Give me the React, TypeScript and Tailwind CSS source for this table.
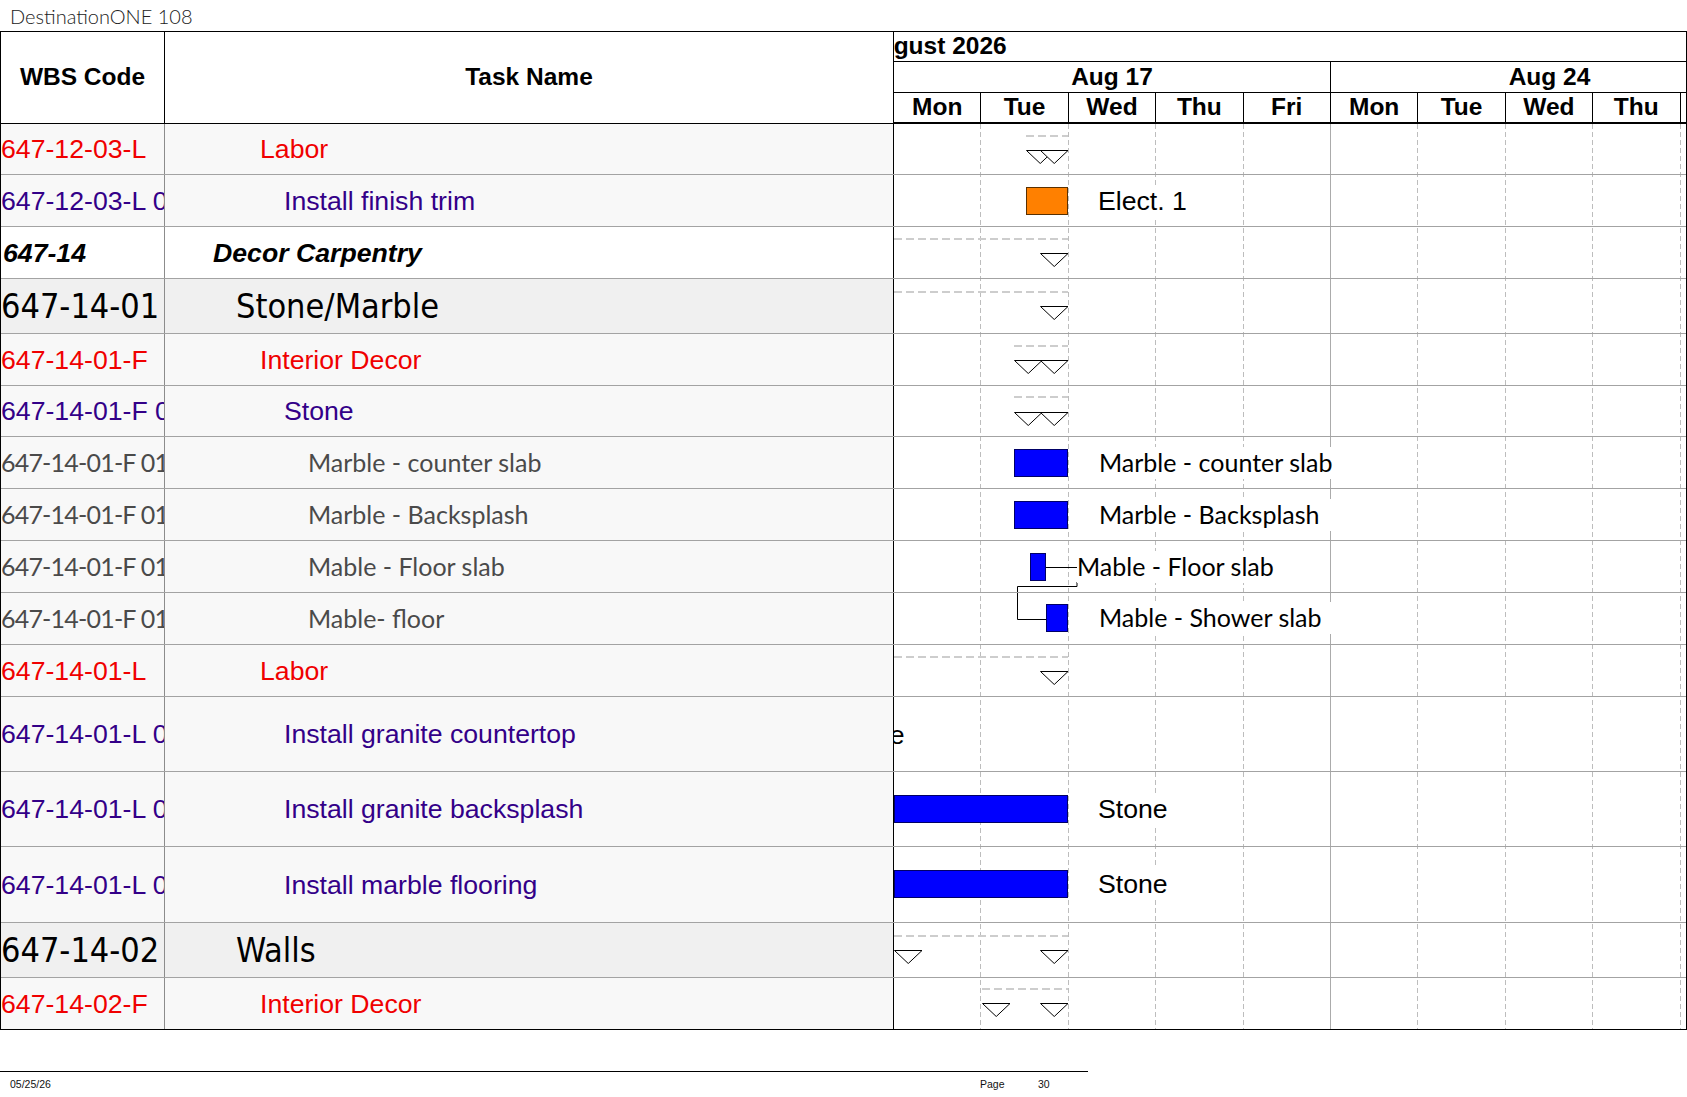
import React from 'react';

type Kind = 'red' | 'purple' | 'bi' | 'big' | 'gray';
type Row = { h: number; code: string; name: string; kind: Kind };

const rows: Row[] = [
  { h: 51, code: '647-12-03-L', name: 'Labor', kind: 'red' },
  { h: 52, code: '647-12-03-L 01', name: 'Install finish trim', kind: 'purple' },
  { h: 52, code: '647-14', name: 'Decor Carpentry', kind: 'bi' },
  { h: 55, code: '647-14-01', name: 'Stone/Marble', kind: 'big' },
  { h: 52, code: '647-14-01-F', name: 'Interior Decor', kind: 'red' },
  { h: 51, code: '647-14-01-F 01', name: 'Stone', kind: 'purple' },
  { h: 52, code: '647-14-01-F 01', name: 'Marble - counter slab', kind: 'gray' },
  { h: 52, code: '647-14-01-F 01', name: 'Marble - Backsplash', kind: 'gray' },
  { h: 52, code: '647-14-01-F 01', name: 'Mable - Floor slab', kind: 'gray' },
  { h: 52, code: '647-14-01-F 01', name: 'Mable- floor', kind: 'gray' },
  { h: 52, code: '647-14-01-L', name: 'Labor', kind: 'red' },
  { h: 75, code: '647-14-01-L 01', name: 'Install granite countertop', kind: 'purple' },
  { h: 75, code: '647-14-01-L 02', name: 'Install granite backsplash', kind: 'purple' },
  { h: 76, code: '647-14-01-L 03', name: 'Install marble flooring', kind: 'purple' },
  { h: 55, code: '647-14-02', name: 'Walls', kind: 'big' },
  { h: 51, code: '647-14-02-F', name: 'Interior Decor', kind: 'red' },
];

const kindStyle: Record<Kind, { bg: string; text: string; indent: string; code: string }> = {
  red: {
    bg: 'bg-[#f8f8f8]',
    text: "font-['Liberation_Sans',Arial,sans-serif] text-[26.67px] text-[#f00000]",
    indent: 'pl-[95px]',
    code: 'pl-0',
  },
  purple: {
    bg: 'bg-[#f8f8f8]',
    text: "font-['Liberation_Sans',Arial,sans-serif] text-[26.67px] text-[#330088]",
    indent: 'pl-[119px]',
    code: 'pl-0',
  },
  bi: {
    bg: 'bg-white',
    text: "font-['Liberation_Sans',Arial,sans-serif] text-[26.67px] font-bold italic text-black",
    indent: 'pl-[48px]',
    code: 'pl-[2px]',
  },
  big: {
    bg: 'bg-[#f0f0f0]',
    text: "font-['DejaVu_Sans_Condensed','DejaVu_Sans',sans-serif] font-stretch-condensed text-[34px] text-black",
    indent: 'pl-[71px]',
    code: 'pl-0',
  },
  gray: {
    bg: 'bg-[#f8f8f8]',
    text: "font-['Lato','Noto_Sans',sans-serif] text-[25px] text-[#4a4a4a]",
    indent: 'pl-[143px]',
    code: 'pl-0 tracking-[-0.8px]',
  },
};

type Tri = { x: number; y: number };
type Gantt = {
  dash?: { x0: number; x1: number; y: number };
  tris?: Tri[];
  bar?: { x: number; w: number; y: number; color: 'blue' | 'orange' };
  label?: { x: number; text: string; calibri?: boolean };
};

const gantt: Gantt[] = [
  { dash: { x0: 132, x1: 174, y: 11 }, tris: [{ x: 132, y: 26 }, { x: 146, y: 26 }] },
  { bar: { x: 132, w: 42, y: 12, color: 'orange' }, label: { x: 204, text: 'Elect. 1' } },
  { dash: { x0: 0, x1: 174, y: 11 }, tris: [{ x: 146, y: 26 }] },
  { dash: { x0: 0, x1: 174, y: 12 }, tris: [{ x: 146, y: 27 }] },
  { dash: { x0: 120, x1: 174, y: 11 }, tris: [{ x: 120, y: 26 }, { x: 146, y: 26 }] },
  { dash: { x0: 120, x1: 174, y: 10 }, tris: [{ x: 120, y: 26 }, { x: 146, y: 26 }] },
  { bar: { x: 120, w: 54, y: 12, color: 'blue' }, label: { x: 205, text: 'Marble - counter slab', calibri: true } },
  { bar: { x: 120, w: 54, y: 12, color: 'blue' }, label: { x: 205, text: 'Marble - Backsplash', calibri: true } },
  { bar: { x: 136, w: 16, y: 12, color: 'blue' }, label: { x: 183, text: 'Mable - Floor slab', calibri: true } },
  { bar: { x: 152, w: 22, y: 11, color: 'blue' }, label: { x: 205, text: 'Mable - Shower slab', calibri: true } },
  { dash: { x0: 0, x1: 174, y: 11 }, tris: [{ x: 146, y: 26 }] },
  { label: { x: -59, text: 'Stone' } },
  { bar: { x: 0, w: 174, y: 23, color: 'blue' }, label: { x: 204, text: 'Stone' } },
  { bar: { x: 0, w: 174, y: 23, color: 'blue' }, label: { x: 204, text: 'Stone' } },
  { dash: { x0: 0, x1: 174, y: 12 }, tris: [{ x: 0, y: 27 }, { x: 146, y: 27 }] },
  { dash: { x0: 88, x1: 174, y: 10 }, tris: [{ x: 88, y: 25 }, { x: 146, y: 25 }] },
];

const DAY = 87.4;
const days = ['Mon', 'Tue', 'Wed', 'Thu', 'Fri', 'Mon', 'Tue', 'Wed', 'Thu', 'Fri'];

function Triangle({ x, y }: Tri) {
  return (
    <svg className="absolute" style={{ left: x, top: y }} width="29" height="14" viewBox="0 0 29 14">
      <polygon points="0.5,0.5 28,0.5 14.25,13.5" fill="white" stroke="black" strokeWidth="1" />
    </svg>
  );
}

function GanttRow({ g, h, last }: { g: Gantt; h: number; last: boolean }) {
  const bar = g.bar;
  const barTop = bar ? bar.y : (h - 28) / 2;
  return (
    <div className={`relative shrink-0 ${last ? '' : 'border-b border-[#a3a3a3]'}`} style={{ height: h }}>
      {g.dash && (
        <div
          className="absolute h-[2px] bg-[repeating-linear-gradient(90deg,#cdcdcd_0px,#cdcdcd_8px,transparent_8px,transparent_12px)]"
          style={{ left: g.dash.x0, width: g.dash.x1 - g.dash.x0, top: g.dash.y }}
        />
      )}
      {g.tris && g.tris.map((t, i) => <Triangle key={i} x={t.x} y={t.y} />)}
      {bar && (
        <div
          className={`absolute h-[28px] border ${bar.color === 'blue' ? 'bg-[#0000ff] border-[#000066]' : 'bg-[#ff8000] border-[#5a3000]'}`}
          style={{ left: bar.x, width: bar.w, top: bar.y }}
        />
      )}
      {g.label && (
        <div
          className={`absolute z-10 flex h-[32px] items-center whitespace-nowrap bg-white pr-[12px] text-black ${
            g.label.calibri
              ? "font-['Lato','Noto_Sans',sans-serif] text-[25px]"
              : "font-['Liberation_Sans',Arial,sans-serif] text-[26.67px]"
          }`}
          style={{ left: g.label.x, top: barTop + 14 - 16 }}
        >
          {g.label.text}
        </div>
      )}
    </div>
  );
}

export default function App() {
  const bodyH = rows.reduce((s, r) => s + r.h, 0);
  const lines = [1, 2, 3, 4, 5, 6, 7, 8, 9];
  return (
    <div className="relative h-[1097px] w-[1687px] overflow-hidden bg-white font-['Liberation_Sans',Arial,sans-serif] text-black">
      {/* Title */}
      <div className="flex h-[31px] items-center pl-[10px] font-['Lato','DejaVu_Sans',sans-serif] text-[20px] font-light leading-none text-[#222]">
        DestinationONE 108
      </div>

      {/* Table */}
      <div className="flex border-y border-l border-black">
        {/* Left part */}
        <div className="flex w-[893px] shrink-0 flex-col">
          <div className="flex h-[92px] shrink-0 border-b border-black bg-white text-[24.5px] font-bold">
            <div className="flex w-[164px] shrink-0 items-center justify-center border-r border-black">WBS Code</div>
            <div className="flex w-[729px] shrink-0 items-center justify-center border-r border-black">Task Name</div>
          </div>
          {rows.map((r, i) => {
            const k = kindStyle[r.kind];
            const last = i === rows.length - 1;
            return (
              <div
                key={i}
                className={`flex shrink-0 ${k.bg} ${last ? '' : 'border-b border-[#a3a3a3]'}`}
                style={{ height: r.h }}
              >
                <div className={`flex w-[164px] shrink-0 items-center overflow-hidden whitespace-nowrap border-r border-[#8c8c8c] ${k.text} ${k.code}`}>
                  {r.code}
                </div>
                <div className={`flex w-[729px] shrink-0 items-center overflow-hidden whitespace-nowrap border-r border-black ${k.indent} ${k.text}`}>
                  {r.name}
                </div>
              </div>
            );
          })}
        </div>

        {/* Gantt */}
        <div className="flex w-[793px] shrink-0 flex-col overflow-hidden border-r border-black">
          <div className="flex h-[30px] shrink-0 items-center overflow-hidden whitespace-nowrap border-b border-black text-[24.5px] font-bold">
            <span className="ml-[-33px]">August 2026</span>
          </div>
          <div className="flex h-[31px] shrink-0 border-b border-black text-[24.5px] font-bold">
            <div className="flex w-[437px] shrink-0 items-center justify-center border-r border-black">Aug 17</div>
            <div className="flex w-[437px] shrink-0 items-center justify-center">Aug 24</div>
          </div>
          <div className="flex h-[31px] shrink-0 border-b-2 border-black text-[24.5px] font-bold">
            {days.map((d, i) => (
              <div key={i} className="flex w-[87.4px] shrink-0 items-center justify-center overflow-hidden border-r border-black">
                {d}
              </div>
            ))}
          </div>

          <div className="relative flex flex-col" style={{ height: bodyH }}>
            {/* grid lines */}
            {lines.map((k) =>
              k === 5 ? (
                <div key={k} className="absolute top-0 h-full w-px bg-[#ababab]" style={{ left: k * DAY - 1 }} />
              ) : (
                <div
                  key={k}
                  className="absolute top-0 h-full w-px bg-[repeating-linear-gradient(180deg,#bdbdbd_0px,#bdbdbd_5px,transparent_5px,transparent_8px)]"
                  style={{ left: k * DAY - 1 }}
                />
              )
            )}
            {/* dependency connector */}
            <svg className="absolute left-0 top-0" width="400" height={bodyH}>
              <path d="M152 443.5 H200 M183 458 V462.5 H123.5 V495.5 H152" fill="none" stroke="black" strokeWidth="1" />
            </svg>
            {rows.map((r, i) => (
              <GanttRow key={i} g={gantt[i]} h={r.h} last={i === rows.length - 1} />
            ))}
          </div>
        </div>
      </div>

      {/* Footer */}
      <div className="mt-[41px] w-[1088px] border-t border-black">
        <div className="flex pt-[6px] text-[10.5px] leading-[13px] text-[#111]">
          <div className="w-[980px] shrink-0 pl-[10px]">05/25/26</div>
          <div className="w-[58px] shrink-0">Page</div>
          <div>30</div>
        </div>
      </div>
    </div>
  );
}
